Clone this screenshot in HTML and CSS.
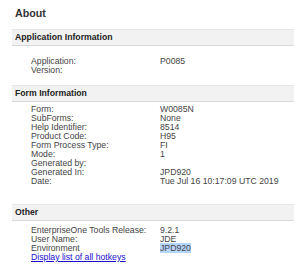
FILE: index.html
```html
<!DOCTYPE html>
<html>
  <head>
    <title>About</title>
    <link rel="stylesheet" href="styles.css">
  </head>
  <body>
    <h1 class="title">About</h1>

    <section class="group">
      <div class="group-head">Application Information</div>
      <div class="info">
        <span>Application:</span><span>P0085</span>
        <span>Version:</span><span></span>
      </div>
    </section>

    <section class="group">
      <div class="group-head">Form Information</div>
      <div class="info info-form">
        <span>Form:</span><span>W0085N</span>
        <span>SubForms:</span><span>None</span>
        <span>Help Identifier:</span><span>8514</span>
        <span>Product Code:</span><span>H95</span>
        <span>Form Process Type:</span><span>FI</span>
        <span>Mode:</span><span>1</span>
        <span>Generated by:</span><span></span>
        <span>Generated In:</span><span>JPD920</span>
        <span>Date:</span><span>Tue Jul 16 10:17:09 UTC 2019</span>
      </div>
    </section>

    <section class="group">
      <div class="group-head">Other</div>
      <div class="info info-other">
        <span>EnterpriseOne Tools Release:</span><span>9.2.1</span>
        <span>User Name:</span><span>JDE</span>
        <span>Environment</span><span><span class="selected">JPD920</span></span>
        <a class="hotkeys" href="#">Display list of all hotkeys</a>
      </div>
    </section>
  </body>
</html>
```

FILE: styles.css
```css
body
{
  margin: 0;
  font-family: "Liberation Sans", Arial, sans-serif;
  font-size: 8.7px;
  color: #333;
  background-color: #fff;
}

.title
{
  margin: 0;
  padding: 7px 15px 0;
  height: 22px;
  font-size: 10.7px;
  line-height: 13px;
  font-weight: bold;
  color: #333;
}

.group-head
{
  margin-left: 12px;
  padding: 3px 3px 3px;
  line-height: 9px;
  font-weight: bold;
  color: #222;
  background-color: #f2f2f2;
  border-top: 1px solid #e6e6e6;
  border-bottom: 1px solid #d9d9d9;
}

.info
{
  display: grid;
  grid-template-columns: 129px auto;
  padding: 11px 0 10px 31px;
  line-height: 9px;
  color: #444;
}

.info-form
{
  padding-top: 3px;
  padding-bottom: 18px;
}

.info-other
{
  padding-top: 5px;
}

.selected
{
  background-color: #b5d5fc;
}

.hotkeys
{
  grid-column: 1 / 3;
  color: #1a0dcc;
}
```
